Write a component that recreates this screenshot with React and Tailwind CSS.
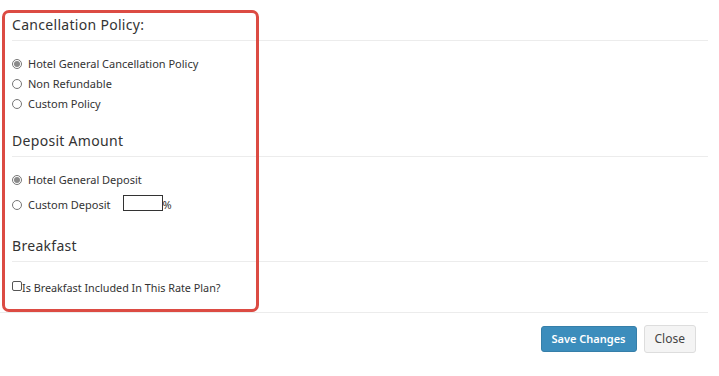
import React from 'react';

const Radio = ({ checked }) => (
    <span className="w-[10px] h-[10px] rounded-full border border-[#767676] bg-white flex items-center justify-center shrink-0">
        {checked && <span className="w-[6px] h-[6px] rounded-full bg-[#8a8a8a]" />}
    </span>
);

const Option = ({ checked, label, children }) => (
    <label className="h-[20px] flex items-center gap-[6px] text-[11px] text-[#333]">
        <Radio checked={checked} />
        <span>{label}</span>
        {children}
    </label>
);

const Heading = ({ children, className = '' }) => (
    <div className={className}>
        <h4 className="h-[20px] leading-[20px] text-[14px] tracking-[0.3px] text-[#333] font-normal">{children}</h4>
        <div className="mt-[5px] h-px bg-[#ececec]" />
    </div>
);

export default function App() {
    return (
        <div className="w-[719px] h-[376px] bg-white relative overflow-hidden" style={{ fontFamily: '"Noto Sans", "Liberation Sans", sans-serif' }}>
            <div className="w-[708px]">
                {/* cuerpo */}
                <div className="pl-3">
                    <Heading className="pt-[15px]">Cancellation Policy:</Heading>
                    <div className="pt-[13px] flex flex-col">
                        <Option checked label="Hotel General Cancellation Policy" />
                        <Option label="Non Refundable" />
                        <Option label="Custom Policy" />
                    </div>

                    <Heading className="pt-[17px]">Deposit Amount</Heading>
                    <div className="pt-[13px] flex flex-col">
                        <Option checked label="Hotel General Deposit" />
                        <label className="mt-[4px] h-[22px] flex items-center text-[11px] text-[#333]">
                            <Radio />
                            <span className="ml-[6px]">Custom Deposit</span>
                            <input type="text" className="ml-[12px] mb-[4px] w-[40px] h-[16px] border border-[#333] outline-none" />
                            <span>%</span>
                        </label>
                    </div>

                    <Heading className="pt-[20px]">Breakfast</Heading>
                    <div className="pt-[16px]">
                        <label className="h-[20px] flex items-center text-[10.8px] text-[#333]">
                            <span className="w-[10px] h-[10px] border border-[#555] rounded-[2px] bg-white mb-[4px] shrink-0" />
                            <span>Is Breakfast Included In This Rate Plan?</span>
                        </label>
                    </div>
                </div>

                {/* pie */}
                <div className="mt-[14px] border-t border-[#ececec] pt-[13px] pr-3 flex justify-end gap-[7px]">
                    <button className="h-[26px] px-[10px] rounded-[3px] bg-[#3c8dbc] border border-[#367fa9] text-white text-[11px] font-semibold">Save Changes</button>
                    <button className="h-[28px] px-[10px] -mt-px rounded-[3px] bg-[#f4f4f4] border border-[#ddd] text-[#444] text-[12px]">Close</button>
                </div>
            </div>

            {/* marco rojo de anotación */}
            <div className="absolute left-[2px] top-[10px] w-[257px] h-[302px] border-[3px] border-[#dc4b43] rounded-[7px] pointer-events-none" />
        </div>
    );
}
